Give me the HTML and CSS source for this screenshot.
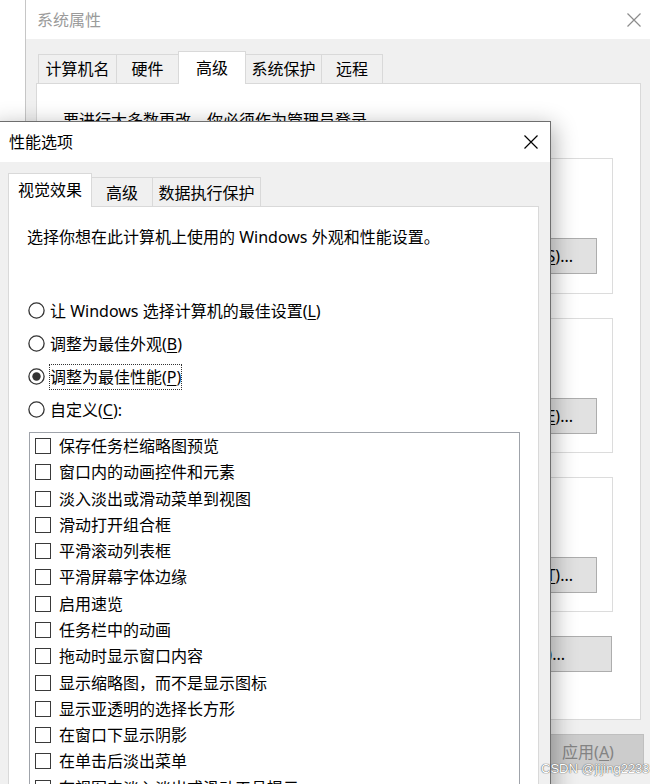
FILE: index.html
```html
<!DOCTYPE html>
<html lang="zh-CN">
<head>
<meta charset="utf-8">
<title>性能选项</title>
<link rel="stylesheet" href="styles.css">
</head>
<body>
<div class="screen">
  <div class="sys-win">
    <div class="sys-title">
      <span>系统属性</span>
      <svg class="x-icon x-dim" width="14" height="14" viewBox="0 0 14 14"><path d="M0.5 0.5L13.5 13.5M13.5 0.5L0.5 13.5"/></svg>
    </div>
    <div class="sys-body">
      <div class="tabs sys-tabs">
        <div class="tab t-name">计算机名</div>
        <div class="tab t-hw">硬件</div>
        <div class="tab active t-adv">高级</div>
        <div class="tab t-prot">系统保护</div>
        <div class="tab t-remote">远程</div>
      </div>
      <div class="sys-panel">
        <p class="admin-note">要进行大多数更改，你必须作为管理员登录。</p>
        <div class="group"><button class="btn btn-set">设置(<u>S</u>)...</button></div>
        <div class="group"><button class="btn btn-set">设置(<u>E</u>)...</button></div>
        <div class="group"><button class="btn btn-set">设置(<u>T</u>)...</button></div>
        <div class="env-row"><button class="btn btn-env">环境变量(<u>N</u>)...</button></div>
      </div>
      <div class="sys-footer">
        <button class="btn btn-apply" disabled>应用(<u>A</u>)</button>
      </div>
    </div>
  </div>

  <div class="perf-win">
    <div class="perf-title">
      <span>性能选项</span>
      <svg class="x-icon" width="14" height="14" viewBox="0 0 14 14"><path d="M0.5 0.5L13.5 13.5M13.5 0.5L0.5 13.5"/></svg>
    </div>
    <div class="perf-body">
      <div class="tabs perf-tabs">
        <div class="tab active p-visual">视觉效果</div>
        <div class="tab p-adv">高级</div>
        <div class="tab p-dep">数据执行保护</div>
      </div>
      <div class="perf-panel">
        <p class="desc">选择你想在此计算机上使用的 Windows 外观和性能设置。</p>
        <div class="radios">
          <div class="radio-row">
            <svg class="radio" width="17" height="17" viewBox="0 0 17 17"><circle cx="8.5" cy="8.5" r="7.6"/></svg>
            <span class="radio-label">让 Windows 选择计算机的最佳设置(<u>L</u>)</span>
          </div>
          <div class="radio-row">
            <svg class="radio" width="17" height="17" viewBox="0 0 17 17"><circle cx="8.5" cy="8.5" r="7.6"/></svg>
            <span class="radio-label">调整为最佳外观(<u>B</u>)</span>
          </div>
          <div class="radio-row">
            <svg class="radio" width="17" height="17" viewBox="0 0 17 17"><circle cx="8.5" cy="8.5" r="7.6"/><circle class="dot" cx="8.5" cy="8.5" r="4.2"/></svg>
            <span class="radio-label focused">调整为最佳性能(<u>P</u>)</span>
          </div>
          <div class="radio-row">
            <svg class="radio" width="17" height="17" viewBox="0 0 17 17"><circle cx="8.5" cy="8.5" r="7.6"/></svg>
            <span class="radio-label">自定义(<u>C</u>):</span>
          </div>
        </div>
        <ul class="listbox">
          <li><span class="check"></span>保存任务栏缩略图预览</li>
          <li><span class="check"></span>窗口内的动画控件和元素</li>
          <li><span class="check"></span>淡入淡出或滑动菜单到视图</li>
          <li><span class="check"></span>滑动打开组合框</li>
          <li><span class="check"></span>平滑滚动列表框</li>
          <li><span class="check"></span>平滑屏幕字体边缘</li>
          <li><span class="check"></span>启用速览</li>
          <li><span class="check"></span>任务栏中的动画</li>
          <li><span class="check"></span>拖动时显示窗口内容</li>
          <li><span class="check"></span>显示缩略图，而不是显示图标</li>
          <li><span class="check"></span>显示亚透明的选择长方形</li>
          <li><span class="check"></span>在窗口下显示阴影</li>
          <li><span class="check"></span>在单击后淡出菜单</li>
          <li><span class="check"></span>在视图中淡入淡出或滑动工具提示</li>
        </ul>
      </div>
    </div>
  </div>

  <div class="watermark">CSDN @jijing2233</div>
</div>
</body>
</html>
```

FILE: styles.css
```css
* { box-sizing: border-box; }

body {
  margin: 0;
  font-family: "Noto Sans", "Noto Sans CJK SC", sans-serif;
  font-size: 16px;
  line-height: 20px;
  color: #000;
}

p, ul { margin: 0; padding: 0; }

u { text-decoration: underline; text-underline-offset: 2px; }

.screen {
  position: relative;
  width: 650px;
  height: 784px;
  overflow: hidden;
  background: #fff;
}

.x-icon path { stroke: #000; stroke-width: 1.2; fill: none; }
.x-dim path { stroke: #8c8c8c; }

/* ---------- back window: 系统属性 ---------- */
.sys-win {
  margin-left: 25px;
  height: 784px;
  border-left: 1px solid #c6c6c6;
  background: #f0f0f0;
  display: flex;
  flex-direction: column;
}

.sys-title {
  height: 39px;
  flex: none;
  background: #fff;
  color: #9b9b9b;
  display: flex;
  align-items: center;
  justify-content: space-between;
  padding: 0 9px 0 11px;
}

.sys-body {
  flex: 1;
  padding: 12px 9px 0 10px;
  display: flex;
  flex-direction: column;
}

.tabs {
  display: flex;
  align-items: flex-end;
  flex: none;
}

.tab {
  height: 29px;
  border: 1px solid #d9d9d9;
  border-bottom: none;
  background: #f0f0f0;
  display: flex;
  align-items: center;
  justify-content: center;
  margin-left: -1px;
  white-space: nowrap;
}
.tab:first-child { margin-left: 0; }

.tab.active {
  position: relative;
  z-index: 1;
  background: #fff;
  margin-bottom: -1px;
}

.sys-tabs { height: 32px; padding-left: 2px; }
.sys-tabs .tab.active { height: 33px; padding-bottom: 1px; }
.t-name { width: 79px; }
.t-hw { width: 63px; }
.t-adv { width: 68px; }
.t-prot { width: 77px; }
.t-remote { width: 62px; }

.sys-panel {
  height: 637px;
  flex: none;
  border: 1px solid #d9d9d9;
  background: #fff;
  padding: 0 27px 0 26px;
  display: flex;
  flex-direction: column;
}

.admin-note { margin-top: 26px; white-space: nowrap; }

.group {
  height: 136px;
  margin-top: 24px;
  border: 1px solid #dcdcdc;
  display: flex;
  justify-content: flex-end;
  align-items: flex-start;
  padding: 79px 15px 0 0;
}
.admin-note + .group { margin-top: 28px; }
.group + .group { height: 135px; }

.btn {
  font: inherit;
  color: #000;
  height: 36px;
  background: #e1e1e1;
  border: 1px solid #adadad;
  border-radius: 0;
  display: flex;
  align-items: center;
  white-space: nowrap;
  padding: 0;
}

.btn-set {
  width: 150px;
  justify-content: flex-end;
  padding-right: 23px;
}

.env-row {
  margin-top: 24px;
  display: flex;
  justify-content: flex-end;
  padding-right: 1px;
}

.btn-env {
  width: 200px;
  justify-content: flex-end;
  padding-right: 46px;
}

.sys-footer {
  display: flex;
  justify-content: flex-end;
  margin-top: 14px;
  margin-right: -3px;
}

.btn-apply {
  width: 112px;
  justify-content: center;
  background: #cccccc;
  border-color: #bfbfbf;
  color: #838383;
}

/* ---------- front dialog: 性能选项 ---------- */
.perf-win {
  position: absolute;
  left: -10px;
  top: 121px;
  width: 561px;
  height: 720px;
  border: 1px solid #6e6e6e;
  background: #f0f0f0;
  box-shadow: 3px 5px 22px rgba(0, 0, 0, 0.32);
  display: flex;
  flex-direction: column;
}

.perf-title {
  height: 40px;
  flex: none;
  background: #fff;
  display: flex;
  align-items: center;
  justify-content: space-between;
  padding: 0 12px 0 18px;
}

.perf-body {
  flex: 1;
  padding: 11px 11px 0 17px;
  display: flex;
  flex-direction: column;
}

.perf-tabs { height: 33px; }
.perf-tabs .tab.active { height: 34px; padding-bottom: 1px; }
.p-visual { width: 84px; }
.p-adv { width: 62px; padding-top: 1px; }
.p-dep { width: 109px; padding-top: 1px; }

.perf-panel {
  flex: 1;
  border: 1px solid #d9d9d9;
  background: #fff;
  padding: 0 0 0 18px;
}

.desc { margin-top: 20px; white-space: nowrap; }

.radios {
  margin-top: 50.5px;
  display: flex;
  flex-direction: column;
  gap: 7.1px;
}

.radio-row {
  height: 26px;
  display: flex;
  align-items: center;
  gap: 4px;
  padding-left: 1px;
}

.radio { flex: none; }
.radio circle { fill: #fff; stroke: #333; stroke-width: 1.3; }
.radio circle.dot { fill: #333; stroke: none; }

.radio-label {
  height: 26px;
  display: flex;
  align-items: center;
  border: 1px dotted transparent;
  padding: 0;
  white-space: nowrap;
}
.radio-label.focused { border-color: #333; }

.listbox {
  list-style: none;
  margin: 9px 0 0 2px;
  width: 491px;
  height: 400px;
  border: 1px solid #9fa3aa;
  padding: 0 0 0 5px;
}

.listbox li {
  height: 26.3px;
  display: flex;
  align-items: center;
  gap: 8px;
  white-space: nowrap;
}

.check {
  flex: none;
  width: 16px;
  height: 16px;
  border: 1.6px solid #3a3a3a;
  background: #fff;
}

.watermark {
  position: absolute;
  left: 541px;
  top: 761px;
  font-family: "Liberation Sans", sans-serif;
  font-size: 13px;
  line-height: 16px;
  color: #fff;
  text-shadow: 0 0 1px #555, 0 0 1px #555;
  white-space: nowrap;
}
```
